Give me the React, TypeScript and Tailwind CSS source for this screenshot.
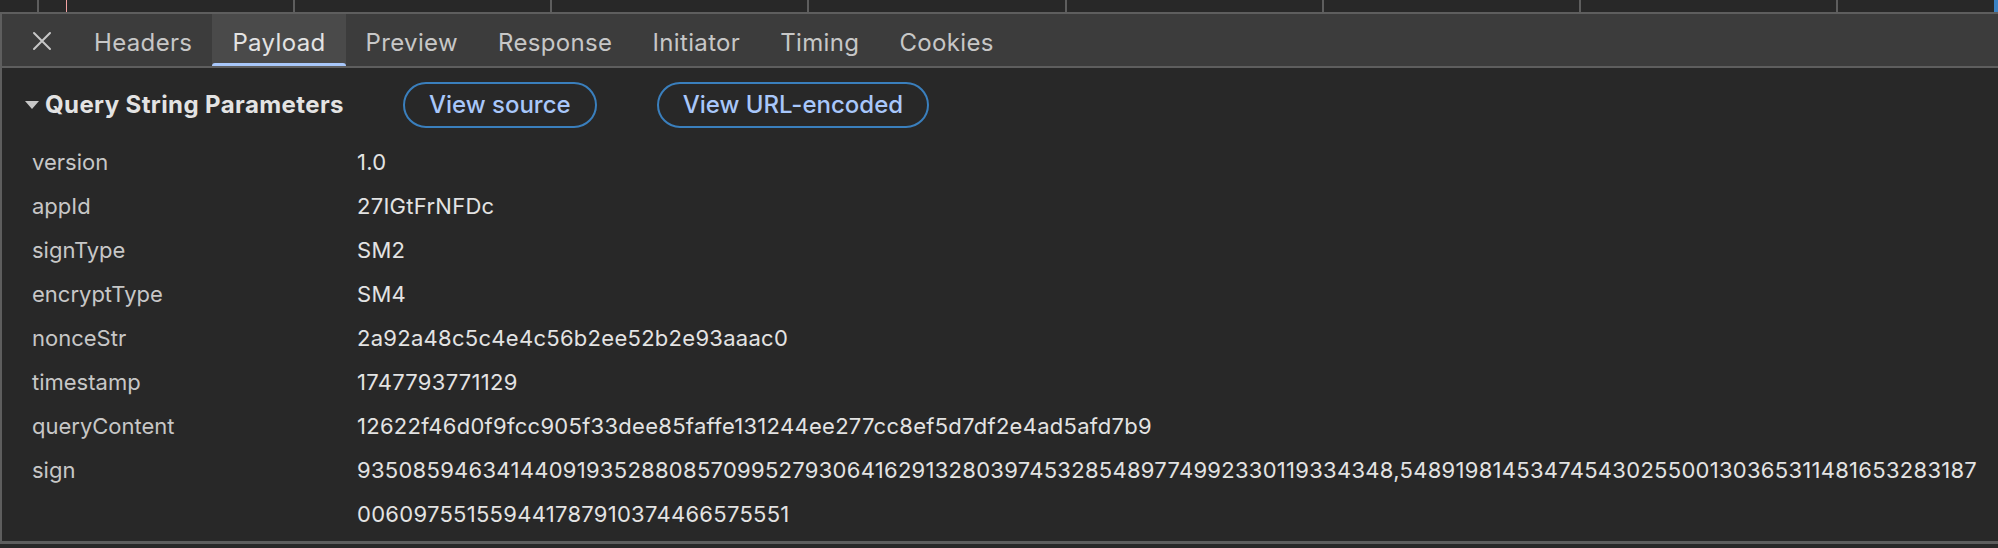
import React from "react";

const rows: { name: string; value: string[] }[] = [
  { name: "version", value: ["1.0"] },
  { name: "appId", value: ["27IGtFrNFDc"] },
  { name: "signType", value: ["SM2"] },
  { name: "encryptType", value: ["SM4"] },
  { name: "nonceStr", value: ["2a92a48c5c4e4c56b2ee52b2e93aaac0"] },
  { name: "timestamp", value: ["1747793771129"] },
  {
    name: "queryContent",
    value: ["12622f46d0f9fcc905f33dee85faffe131244ee277cc8ef5d7df2e4ad5afd7b9"],
  },
  {
    name: "sign",
    value: [
      "93508594634144091935288085709952793064162913280397453285489774992330119334348,54891981453474543025500130365311481653283187",
      "006097551559441787910374466575551",
    ],
  },
];

const tabs = ["Headers", "Payload", "Preview", "Response", "Initiator", "Timing", "Cookies"];

// waterfall column widths in the strip above the tabs
const cells = [256, 257, 257, 258, 257, 257, 257, 158];

export default function App() {
  return (
    <div className="w-[1998px] h-[548px] overflow-hidden bg-[#282828] font-['Inter',sans-serif]">
      {/* Waterfall strip */}
      <div className="relative flex h-[12px]">
        <div className="w-[37px] shrink-0" />
        {cells.map((w, i) => (
          <div
            key={i}
            className="shrink-0 border-l-2 border-[#5e5e5e]"
            style={{ width: w }}
          />
        ))}
        <div className="w-[4px] shrink-0 bg-[#3b82c4]" />
        <div className="absolute left-[66px] top-0 h-full w-[1px] bg-[#f4a3a3]" />
      </div>
      <div className="h-[2px] bg-[#5e5e5e]" />

      {/* Tab bar */}
      <div className="flex h-[52px] border-l-2 border-[#5e5e5e] bg-[#3c3c3c]">
        <div className="flex w-[72px] shrink-0 items-center pl-[30px] pt-[2px]">
          <svg width="20" height="20" viewBox="0 0 20 20" fill="none">
            <path
              d="M2 2 L18 18 M18 2 L2 18"
              stroke="#c7c7c7"
              strokeWidth="2"
              strokeLinecap="round"
            />
          </svg>
        </div>
        {tabs.map((t) => {
          const active = t === "Payload";
          return (
            <div
              key={t}
              className={
                active
                  ? "relative flex h-full items-center bg-[#4a4a4a] px-[20px] pt-[5px] text-[24px] tracking-[0.35px] text-[#e3e3e3]"
                  : "flex h-full items-center px-[20px] pt-[5px] text-[24px] tracking-[0.35px] text-[#c7c7c7]"
              }
            >
              {t}
              {active && (
                <div className="absolute bottom-0 left-0 right-0 h-[3px] rounded-t-[3px] bg-[#a8c7fa]" />
              )}
            </div>
          );
        })}
      </div>
      <div className="h-[2px] bg-[#5e5e5e]" />

      {/* Payload content */}
      <div className="h-[473px] border-l-2 border-[#5e5e5e]">
        <div className="flex h-[72px] items-center pl-[23px] pt-[2px]">
          <svg width="14" height="8" viewBox="0 0 14 8" className="mr-[6px]">
            <path d="M0 0 L14 0 L7 8 Z" fill="#c7c7c7" />
          </svg>
          <span className="text-[24px] font-bold tracking-[0.4px] text-[#e3e3e3]">
            Query String Parameters
          </span>
          <button className="ml-[59px] h-[46px] rounded-full border-2 border-[#3a7fbd] px-[24px] text-[24px] font-medium text-[#a8c7fa]">
            View source
          </button>
          <button className="ml-[60px] h-[46px] rounded-full border-2 border-[#3a7fbd] px-[24px] text-[24px] font-medium text-[#a8c7fa]">
            View URL-encoded
          </button>
        </div>

        {rows.map((r) => (
          <div key={r.name} className="flex pl-[30px] text-[22px] leading-[44px]">
            <div className="w-[325px] shrink-0 text-[#c7c7c7]">{r.name}</div>
            <div className="tracking-[0.28px] text-[#e3e3e3]">
              {r.value.map((line, i) => (
                <div key={i} className="whitespace-nowrap">
                  {line}
                </div>
              ))}
            </div>
          </div>
        ))}
      </div>
      <div className="h-[3px] bg-[#5e5e5e]" />
    </div>
  );
}
